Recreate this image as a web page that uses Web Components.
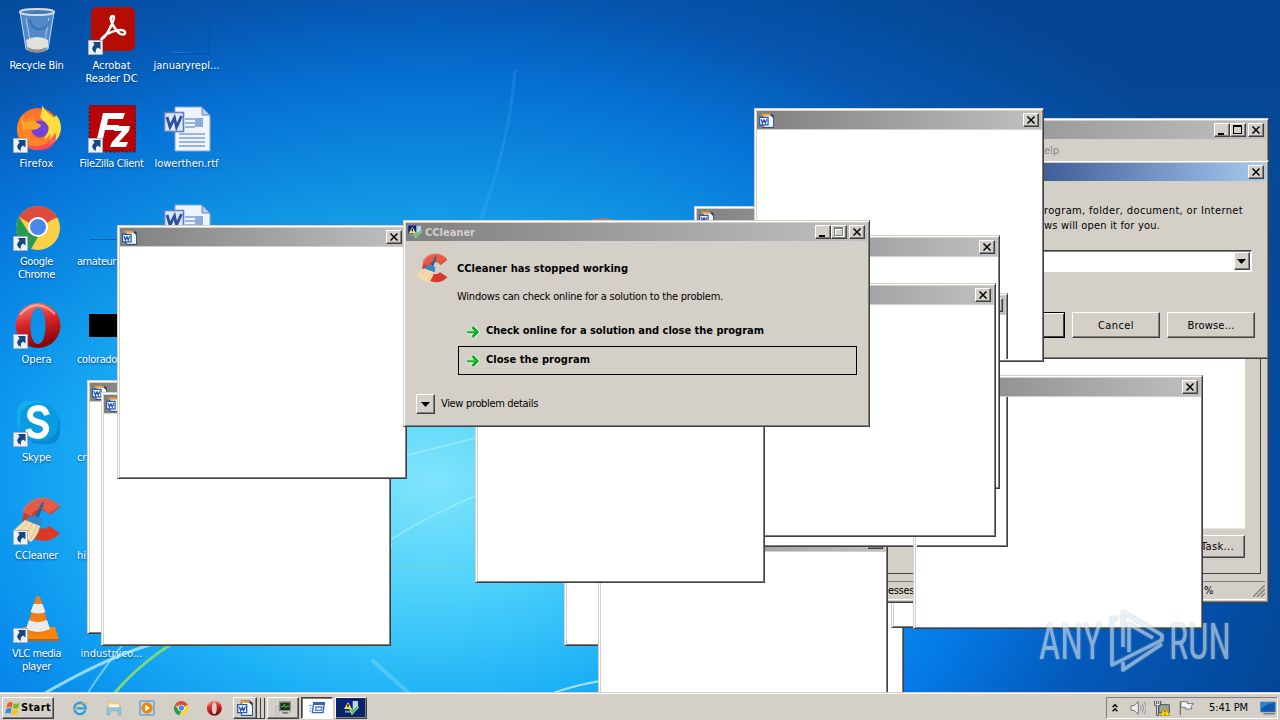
<!DOCTYPE html>
<html lang="en">
<head>
<meta charset="utf-8">
<title>Desktop</title>
<style>
    html, body { margin: 0; height: 100%; overflow: hidden; }
    body { font: 11px/13px "DejaVu Sans Condensed", "DejaVu Sans", sans-serif; font-stretch: condensed; color: #000; }
</style>
</head>
<body>
<classic-desktop>
    <desktop-icons slot="icons">
        <desktop-icon name="bin"><fit-label width="54">Recycle Bin</fit-label></desktop-icon>
        <desktop-icon name="firefox" shortcut><fit-label width="34">Firefox</fit-label></desktop-icon>
        <desktop-icon name="chrome" shortcut><fit-label width="33">Google</fit-label><fit-label width="37">Chrome</fit-label></desktop-icon>
        <desktop-icon name="opera" shortcut><fit-label width="30">Opera</fit-label></desktop-icon>
        <desktop-icon name="skype" shortcut><fit-label width="29">Skype</fit-label></desktop-icon>
        <desktop-icon name="ccleaner" shortcut><fit-label width="43">CCleaner</fit-label></desktop-icon>
        <desktop-icon name="vlc" shortcut><fit-label width="49">VLC media</fit-label><fit-label width="29">player</fit-label></desktop-icon>

        <desktop-icon name="acrobat" shortcut><fit-label width="38">Acrobat</fit-label><fit-label width="52">Reader DC</fit-label></desktop-icon>
        <desktop-icon name="filezilla" shortcut><fit-label width="64">FileZilla Client</fit-label></desktop-icon>
        <desktop-icon name="line" start><fit-label width="39">amateur</fit-label></desktop-icon>
        <desktop-icon name="black" start><fit-label width="40">colorado</fit-label></desktop-icon>
        <desktop-icon name="none" start><fit-label width="9">cr</fit-label></desktop-icon>
        <desktop-icon name="none" start><fit-label width="9">hi</fit-label></desktop-icon>
        <desktop-icon name="none"><fit-label width="62">industryco...</fit-label></desktop-icon>

        <desktop-icon name="blank"><fit-label width="66">januaryrepl...</fit-label></desktop-icon>
        <desktop-icon name="word"><fit-label width="64">lowerthen.rtf</fit-label></desktop-icon>
        <desktop-icon name="word"></desktop-icon>
    </desktop-icons>

    <blank-window x="87" y="380"></blank-window>
    <blank-window x="101" y="392"></blank-window>
    <blank-window x="117" y="225"></blank-window>
    <blank-window x="694" y="206"></blank-window>
    <blank-window x="564" y="392"></blank-window>
    <blank-window x="614" y="470"></blank-window>
    <blank-window x="891" y="374"></blank-window>

    <classic-window x="868" y="118" w="401" h="485" buttons="min max close">
        <task-manager></task-manager>
    </classic-window>
    <classic-window x="922" y="160" w="347" h="199" buttons="close" active>
        <run-form></run-form>
    </classic-window>

    <blank-window x="754" y="108"></blank-window>
    <blank-window x="913" y="375"></blank-window>
    <blank-window x="598" y="530"></blank-window>
    <blank-window x="718" y="293" class="ghost"></blank-window>
    <blank-window x="710" y="235"></blank-window>
    <blank-window x="706" y="283"></blank-window>
    <blank-window x="475" y="329"></blank-window>

    <classic-window x="403" y="220" w="467" h="207" buttons="min max-off close">
        <app-icon slot="icon" name="crash" size="14"></app-icon>
        <fit-label slot="title" width="50">CCleaner</fit-label>
        <crash-report></crash-report>
    </classic-window>

    <any-watermark slot="over"></any-watermark>
    <task-bar slot="bar"></task-bar>
</classic-desktop>

<script>
const WORD_DOC = `
    <path d="M12 2h27l8 8v36H12z" fill="#eef4fd" stroke="#8aa4cf"/>
    <path d="M39 2v8h8z" fill="#b8cbea" stroke="#6484ba"/>
    <path d="M22 14h10M22 18h10M22 22h10M16 29h26M16 33h26M16 37h26M16 41h26" stroke="#7f9fd4" stroke-width="1.3"/>
    <path d="M32 13h8v9h-8z" fill="#8eaad8"/>
    <path d="M1.500 7.500h19v19h-19z" fill="#dce7fa" stroke="#5c7fc4" stroke-width="1.600"/>
    <path d="M4 12l3 10 4.500-9 2 9 5-11" fill="none" stroke="#2c4f9e" stroke-width="2.800"/>`;

const CLEANER = `
    <path d="M47 10A21 21 0 1 0 47 36L36 29A9 9 0 1 1 37 18z" fill="#d83a2a"/>
    <path d="M46 9A21 21 0 0 0 9 15l9 4a10 10 0 0 1 18-2z" fill="#ee6a50" opacity=".7"/>
    <path d="M29 5l2 1-6 17-4-2z" fill="#1d69a8"/>
    <path d="M17 18l12 3-1 8-16-5z" fill="#3287c8"/>
    <path d="M12 23l15 6q-2 10-9 16L0 34z" fill="#f5dcae"/>
    <path d="M7 33l9-9M13 38l7-12M17 43l7-14" stroke="#e2bf86"/>`;

const ICONS = {
    none: '',
    bin: `
        <path d="M7 5l6 37q11 6 22 0l6-37z" fill="#9ec4e8" fill-opacity=".5" stroke="#bcd8f0"/>
        <path d="M13 33q11-6 22 0v8q-11 6-21 0z" fill="#e2e2dc"/>
        <path d="M14 40q10 5 20 0l-1 4q-9 3-18 0z" fill="#8d8f90"/>
        <path d="M13 11l4 23M36 11l-4 22" stroke="#e8f5ff" stroke-opacity=".6" fill="none"/>
        <path d="M16 12q4 12 12 10t8-8" stroke="#1d55a4" stroke-width="2" stroke-opacity=".5" fill="none"/>
        <ellipse cx="24" cy="5" rx="17" ry="3" fill="#417fb9" stroke="#d8dcdf" stroke-width="2"/>`,
    firefox: `
        <circle cx="25" cy="24" r="21" fill="#ff722b"/>
        <path d="M29 0q1 4 -2 12l9 10-8 20q18-2 20-18 0-9-5-14-1 3-3 2-8-6-11-12z" fill="#ffdf3d"/>
        <path d="M4 25Q5 14 10 9l3 6q5-5 9-5-2 3 1 6l5 2Q13 26 20 32q10 7 17-3 3 14-12 16Q5 43 4 25z" fill="#ff8426"/>
        <path d="M6 31q8 14 24 9 8-3 12-13Q46 38 35 44 14 49 6 31z" fill="#f8386a" fill-opacity=".75"/>
        <circle cx="27" cy="24" r="8.500" fill="#7441d8"/>
        <path d="M8 12l4 6q9-5 12 0 6 2 3 4-4 4-10 2l-7 1z" fill="#ffa229"/>`,
    chrome: `
        <circle cx="25" cy="25" r="22" fill="#fbd045"/>
        <path d="M25 25L6 14A22 22 0 0 1 44 14z" fill="#dd4b3e"/>
        <path d="M25 15h20l-1-2Z" fill="#dd4b3e"/>
        <path d="M6 14l10 16 9 4-7 12A22 22 0 0 1 6 14z" fill="#259a55"/>
        <circle cx="25" cy="24" r="10" fill="#fff"/><circle cx="25" cy="24" r="8" fill="#4b86ec"/>`,
    opera: `
        <defs><linearGradient id="o" x2=".3" y2="1"><stop stop-color="#ff8e7a"/><stop offset=".5" stop-color="#d8262a"/><stop offset="1" stop-color="#8c070c"/></linearGradient></defs>
        <path fill-rule="evenodd" d="M25 2a22 22 0 1 1 0 45 22 22 0 0 1 0-45zm0 5c-10 0-10 36 0 36s10-36 0-36z" fill="url(#o)"/>
        <path d="M7 14Q23-5 42 13" fill="none" stroke="#ffc4b9" stroke-opacity=".7" stroke-width="2"/>`,
    skype: `
        <rect x="4" y="2" width="30" height="31" rx="11" fill="#16aeea"/>
        <rect x="14" y="13" width="33" height="32" rx="11" fill="#0989d4"/>
        <rect x="7" y="4" width="38" height="38" rx="16" fill="#089ce2"/>
        <path d="M34 16q-2-7-9-7-8 1-8 7 0 5 8 7 9 2 8 8-2 6-8 6-8 0-10-7" fill="none" stroke="#fff" stroke-width="6"/>`,
    ccleaner: CLEANER,
    vlc: `
        <path d="M10 32h32l4 13H6z" fill="#f78611"/><path d="M6 44h40v2H6z" fill="#c75e05"/>
        <path d="M23 2q2-2 4 0l10 34q-12 8-24 0z" fill="#f47d0d"/>
        <path d="M20.500 9h9l3 8q-7 3-15 0zM16 25q9 4 18 0l3 9q-12 6-24 0z" fill="#ebebeb"/>`,
    acrobat: `
        <rect x="3" y="0" width="44" height="44" rx="6" fill="#b50d04"/>
        <path d="M25 9c-5 0-1 9 4 15 4 5 9 4 8 1-2-4-12-1-18 2-5 3-7 7-5 5 5-3 15-23 11-23z" fill="none" stroke="#fff" stroke-width="2.500"/>`,
    filezilla: `
        <rect x="1.500" y="0.500" width="46" height="46" fill="#b60408" stroke="#850207" stroke-dasharray="2 2" stroke-width="2"/>
        <path d="M15 8h22l-2 6H20l-1 6h12l-2 5H17l-3 13H8z" fill="#fff"/>
        <path d="M27 21h15l-1 5-10 11h9l-2 5H22l2-5 10-11h-8z" fill="#fff"/>`,
    word: WORD_DOC,
    black: `<path d="M1 13h47v23H1z" fill="#000"/>`,
    line: `<path d="M2 36.500h46" stroke="#035eb4"/>`,
    blank: `<path d="M46.500 20v26.500H4" stroke="#0349a0" stroke-opacity=".7" fill="none"/><path d="M8 45.500h20" stroke="#268be0" stroke-opacity=".6"/>`,
    doc: `
        <path d="M13 2h25l9 9v35H13z" fill="#f2f6ff" stroke="#16336c" stroke-width="3"/>
        <path d="M9 1h28v8H9z" fill="#e9a23c"/><path d="M34 5l12 12V6z" fill="#243a5e"/>
        <path d="M2 14h27v24H2z" fill="#fff" stroke="#2a59b0" stroke-width="4"/>
        <path d="M7 20l4 12 5-10 4 10 5-12" fill="none" stroke="#1d50b4" stroke-width="4"/>`,
    crash: `
        <path d="M1 2h28v26H1z" fill="#0b1a9c"/><path d="M29 3h16v24H29z" fill="#b8d4ea"/>
        <path d="M15 6l12 21H3z" fill="#f5e52f"/><path d="M15 13v8" stroke="#000" stroke-width="4"/>
        <path d="M6 32h22v6H6z" fill="#8297b5"/><path d="M20 26l7 18 20-22-5-5-13 13z" fill="#4ebd55" stroke="#e5f7e0" stroke-width="2"/>`,
    arrow: `
        <path d="M3 24h34M22 6l18 18-18 18" fill="none" stroke="#eef8ea" stroke-width="15"/>
        <path d="M4 24h34M22 7l17 17-17 17" fill="none" stroke="#12a826" stroke-width="9"/>
        <path d="M5 22h30" stroke="#4fd65c" stroke-width="3"/>`,
    ie: `
        <path d="M40 31A17 17 0 1 1 41 25H14" fill="none" stroke="#2a9fe3" stroke-width="7"/>
        <path d="M5 43Q-3 34 20 17 45 0 45 9q-1 5-4 7" fill="none" stroke="#efc24a" stroke-width="3"/>`,
    explorer: `
        <path d="M5 5h14l3 5h20v25H5z" fill="#f2d98b" stroke="#c4a65b"/>
        <path d="M10 13h28v12H10z" fill="#fcf6dd"/><path d="M3 23h42v22h-9V32H12v13H3z" fill="#8ac8e8" stroke="#4b94bd"/>`,
    player: `
        <path d="M3 3h42v42H3z" fill="#b8dcf2" stroke="#438abf" stroke-width="3"/>
        <circle cx="24" cy="24" r="17" fill="#f1860c"/><path d="M19 14l14 10-14 10z" fill="#fff"/>`,
    manager: `
        <path d="M3 18h8v28H3z" fill="#d9d9d9" stroke="#777"/><path d="M14 6h32v26H14z" fill="#222a26" stroke="#8a8d8a" stroke-width="4"/>
        <path d="M18 20h7l3-8 4 12 4-6h7" stroke="#29d342" stroke-width="3" fill="none"/><path d="M22 36h18v5H22z" fill="#777"/>`,
    run: `
        <path d="M14 8h32l-4 30H10z" fill="#fff" stroke="#3265bf" stroke-width="4"/><path d="M14 7h33l-1 8H13z" fill="#3265bf"/>
        <path d="M21 21h18l-2 10H20z" fill="none" stroke="#4f7fd0" stroke-width="4"/><path d="M0 17h8M3 25h5M0 33h7" stroke="#6d98dc" stroke-width="3"/>`,
    flagwin: `
        <path d="M8 9q8-6 15-1l-3 15q-8-4-16 1z" fill="#ef5a24"/><path d="M26 10q8 4 18-2l-4 16q-8 5-17 0z" fill="#7fb92b"/>
        <path d="M4 27q8-5 16-1l-4 15Q8 36 0 42z" fill="#2f92dc"/><path d="M23 27q8 5 17 1l-4 15q-8 5-17-1z" fill="#fbc21c"/>`,
    sound: `<path d="M3 17h9L25 5v38L12 31H3z" fill="#eee" stroke="#777" stroke-width="3"/><path d="M31 16q6 8 0 16M37 11q9 13 0 26M43 6q12 18 0 36" fill="none" stroke="#888" stroke-width="2.500"/>`,
    network: `
        <path d="M14 14h32v24H14z" fill="#98a4a8" stroke="#555" stroke-width="3"/>
        <path d="M2 3v13h6v30h6V16h6V3M8 3v9M14 3v9" fill="#eee" stroke="#444" stroke-width="3"/>
        <path d="M33 21l15 26H18z" fill="#ffdc18" stroke="#a27b09" stroke-width="2"/><path d="M33 29v8m0 4v3" stroke="#222" stroke-width="3"/>`,
    flag: `<path d="M7 4v42" stroke="#777" stroke-width="4"/><path d="M9 5h19v6h18l-7 9 3 7H22v-5H9z" fill="#f6f6f6" stroke="#777" stroke-width="3"/>`,
    monitor: `<path d="M2 6h44v30H2z" fill="#1259ae" stroke="#4587ca" stroke-width="2"/><path d="M2 28Q20 8 46 9V6H2z" fill="#2f80d0"/><path d="M10 40h35v3H10z" fill="#555"/>`,
    up: `<path d="M16 21l8-8 8 8M16 35l8-8 8 8" fill="none" stroke="#000" stroke-width="5"/>`
};

class BaseElement extends HTMLElement {
    constructor() {
        super();
        this.attachShadow({ mode: 'open' });
    }

    connectedCallback() {
        this.shadowRoot.innerHTML = `<style>${this.styles}</style>${this.markup}`;
        this.ready();
    }

    get styles() { return ''; }
    get markup() { return '<slot></slot>'; }
    ready() {}
}

/* One line of text, tracked so that it takes the given width. */
class FitLabel extends BaseElement {
    get styles() { return ':host { display: inline-block; white-space: pre; } span { display: inline-block; }'; }
    get markup() { return '<span><slot></slot></span>'; }

    ready() {
        const span = this.shadowRoot.querySelector('span');
        const width = span.getBoundingClientRect().width;
        const spacing = (Number(this.getAttribute('width')) - width) / this.textContent.length;
        span.style.letterSpacing = spacing.toFixed(3) + 'px';
    }
}

class AppIcon extends BaseElement {
    get styles() {
        const size = this.getAttribute('size') || 48;
        return `:host { display: block; flex: none; width: ${size}px; height: ${size}px; } svg { display: block; }`;
    }
    get markup() {
        return `<svg width="100%" height="100%" viewBox="0 0 48 48">${ICONS[this.getAttribute('name')]}</svg>`;
    }
}

class DesktopIcons extends BaseElement {
    get styles() {
        return `:host {
            display: grid; grid-auto-flow: column; grid-template-rows: repeat(7, 98px);
            grid-auto-columns: 75px; justify-content: start; padding-top: 7px; margin-left: -1px;
        }`;
    }
}

class DesktopIcon extends BaseElement {
    get styles() {
        return `
            :host { display: flex; flex-direction: column; align-items: center; color: #fff; text-shadow: 0 1px 2px #023a80; }
            :host([start]) .label { align-self: flex-start; padding-left: 3px; }
            .picture { position: relative; padding-left: 1px; }
            .arrow { position: absolute; left: 1px; bottom: 0; display: none; }
            :host([shortcut]) .arrow { display: block; }
            .label { display: flex; flex-direction: column; align-items: center; padding-top: 4px; }
        `;
    }
    get markup() {
        return `
            <div class="picture">
                <app-icon name="${this.getAttribute('name')}"></app-icon>
                <svg class="arrow" width="15" height="15" viewBox="0 0 15 15">
                    <path d="M.5.5h14v14H.5z" fill="#edf2f8" stroke="#a7b2bd"/>
                    <path d="M5 2h7.500v7.500L10 7.500Q7 9 8 13 1 10 6.500 4.500z" fill="#164681"/>
                </svg>
            </div>
            <div class="label"><slot></slot></div>`;
    }
}

class CaptionButton extends BaseElement {
    get styles() {
        return `
            :host {
                display: block; box-sizing: border-box; width: 16px; height: 14px; background: #d4d0c8;
                border: 1px solid; border-color: #fff #404040 #404040 #fff; box-shadow: inset -1px -1px #808080;
            }
            svg { display: block; }
        `;
    }
    get markup() {
        const glyphs = {
            min: '<path d="M3 9h6v2H3z"/>',
            max: '<path fill-rule="evenodd" d="M2 1h9v9H2zm1 2v6h7V3z"/>',
            'max-off': '<path fill="#fff" fill-rule="evenodd" d="M3 2h9v9H3zm1 2v6h7V4z"/><path fill="#808080" fill-rule="evenodd" d="M2 1h9v9H2zm1 2v6h7V3z"/>',
            close: '<path d="M3.500 2.500l7 7M10.500 2.500l-7 7" stroke="#000" stroke-width="1.500"/>',
            down: '<path d="M2 3h9L6.500 8z"/>'
        };
        return `<svg width="14" height="12">${glyphs[this.getAttribute('glyph')]}</svg>`;
    }
}

class ClassicWindow extends BaseElement {
    get styles() {
        const box = ['x', 'y', 'w', 'h'].map(name => this.getAttribute(name));
        return `
            :host {
                position: absolute; left: ${box[0]}px; top: ${box[1]}px; width: ${box[2]}px; height: ${box[3]}px;
                box-sizing: border-box; display: flex; flex-direction: column; background: #d4d0c8;
                border: 1px solid; border-color: #d4d0c8 #404040 #404040 #d4d0c8;
                box-shadow: inset 1px 1px #fff, inset -1px -1px #808080;
            }
            header {
                display: flex; align-items: center; height: 18px; margin: 2px 2px 0; padding: 0 2px;
                background: linear-gradient(90deg, #808080, #c0c0c0); color: #d4d0c8; font-weight: bold;
            }
            :host([active]) header { background: linear-gradient(90deg, #0a246a, #a6caf0); }
            .title { flex: 1; padding-left: 3px; }
            .buttons { display: flex; }
            caption-button[glyph="close"]:not(:first-child) { margin-left: 2px; }
            main { flex: 1; min-height: 0; display: flex; flex-direction: column; }
        `;
    }
    get markup() {
        const buttons = this.getAttribute('buttons').split(' ')
            .map(glyph => `<caption-button glyph="${glyph}"></caption-button>`).join('');
        return `
            <header>
                <slot name="icon"></slot>
                <div class="title"><slot name="title"></slot></div>
                <div class="buttons">${buttons}</div>
            </header>
            <main><slot></slot></main>`;
    }
}

class BlankWindow extends BaseElement {
    get styles() {
        return `
            :host { display: contents; }
            :host(.ghost) classic-window { clip-path: polygon(0 0, 290px 0, 290px 66px, 282px 66px, 282px 104px, 290px 104px, 290px 254px, 199px 254px, 199px 244px, 195px 244px, 195px 254px, 0 254px); }
            .page { flex: 1; margin: 1px 1px 1px 2px; background: #fff; }
        `;
    }
    get markup() {
        return `
            <classic-window x="${this.getAttribute('x')}" y="${this.getAttribute('y')}" w="290" h="254" buttons="close">
                <app-icon slot="icon" name="doc" size="15"></app-icon>
                <div class="page"></div>
            </classic-window>`;
    }
}

class PushButton extends BaseElement {
    get styles() {
        return `
            :host {
                display: flex; align-items: center; justify-content: center; box-sizing: border-box; height: 26px;
                background: #d4d0c8; border: 1px solid; border-color: #fff #404040 #404040 #fff;
                box-shadow: inset -1px -1px #808080; white-space: nowrap;
            }
            :host([default]) { border-color: #000; box-shadow: inset 1px 1px #fff, inset -1px -1px #404040; }
        `;
    }
}

class TaskManager extends BaseElement {
    get styles() {
        return `
            :host { flex: 1; display: flex; flex-direction: column; }
            nav { padding: 5px 0 0 175px; height: 18px; color: #87847f; }
            .page { flex: 1; margin: 0 7px 7px; border: 1px solid #404040; border-left-color: #fff; padding: 20px 15px 15px; display: flex; flex-direction: column; align-items: flex-end; }
            .list { flex: 1; align-self: stretch; background: #fff; border-bottom: 1px solid #e8e6e0; margin-bottom: 6px; }
            push-button { width: 93px; height: 23px; justify-content: flex-end; padding-right: 10px; }
            footer { display: flex; height: 17px; margin: 0 3px 2px; border-top: 1px solid #808080; border-bottom: 1px solid #fff; align-items: center; }
            .cpu { margin-left: 290px; flex: 1; }
        `;
    }
    get markup() {
        return `
            <nav><fit-label width="15">elp</fit-label></nav>
            <div class="page">
                <div class="list"></div>
                <push-button><fit-label width="33">Task...</fit-label></push-button>
            </div>
            <footer>
                <fit-label width="26" style="padding-left:16px">esses</fit-label>
                <span class="cpu">%</span>
                <svg width="12" height="12"><path d="M0 12L12 0M4 12l8-8M8 12l4-4" stroke="#808080" stroke-width="1.500"/></svg>
            </footer>`;
    }
}

class RunForm extends BaseElement {
    get styles() {
        return `
            :host { display: flex; flex-direction: column; padding: 22px 13px 0 0; }
            p { margin: 0; padding-left: 121px; line-height: 15px; }
            .combo {
                display: flex; justify-content: flex-end; align-items: stretch; height: 18px; background: #fff; margin: 17px 3px 0 40px;
                border: 1px solid; border-color: #404040 #fff #fff #404040; padding: 1px; box-shadow: inset 1px 1px #808080;
            }
            .combo caption-button { height: auto; padding-top: 3px; }
            .buttons { display: flex; justify-content: flex-end; gap: 7px; margin-top: 40px; }
            push-button { width: 88px; }
        `;
    }
    get markup() {
        return `
            <p><fit-label width="199">rogram, folder, document, or Internet</fit-label></p>
            <p><fit-label width="116">ws will open it for you.</fit-label></p>
            <div class="combo"><caption-button glyph="down"></caption-button></div>
            <div class="buttons">
                <push-button default></push-button>
                <push-button><fit-label width="36">Cancel</fit-label></push-button>
                <push-button><fit-label width="47">Browse...</fit-label></push-button>
            </div>`;
    }
}

class CrashReport extends BaseElement {
    get styles() {
        return `
            :host { display: flex; flex-direction: column; padding: 10px 12px 0; }
            .top { display: flex; gap: 9px; }
            .top app-icon { margin-top: 2px; }
            .text { display: flex; flex-direction: column; gap: 15px; padding-top: 11px; }
            b, .choice { font-weight: bold; }
            .choice { display: flex; align-items: center; gap: 6px; box-sizing: border-box; height: 29px; margin-left: 42px; padding: 0 7px; border: 1px solid transparent; }
            .choice fit-label { padding-bottom: 2px; }
            .choice.first { margin-top: 14px; }
            .choice.focus { border-color: #000; }
            .details { display: flex; align-items: center; gap: 6px; margin-top: 19px; }
            .details fit-label { padding-bottom: 2px; }
            .details caption-button { width: 19px; height: 20px; padding: 4px 0 0 2px; }
        `;
    }
    get markup() {
        return `
            <div class="top">
                <app-icon name="ccleaner" size="32"></app-icon>
                <div class="text">
                    <b><fit-label width="171">CCleaner has stopped working</fit-label></b>
                    <fit-label width="266">Windows can check online for a solution to the problem.</fit-label>
                </div>
            </div>
            <div class="choice first"><app-icon name="arrow" size="14"></app-icon><fit-label width="278">Check online for a solution and close the program</fit-label></div>
            <div class="choice focus"><app-icon name="arrow" size="14"></app-icon><fit-label width="104">Close the program</fit-label></div>
            <div class="details"><caption-button glyph="down"></caption-button><fit-label width="97">View problem details</fit-label></div>`;
    }
}

class TaskBar extends BaseElement {
    get styles() {
        return `
            :host { display: flex; align-items: center; box-sizing: border-box; height: 28px; background: #d4d0c8; border-top: 1px solid #d4d0c8; box-shadow: inset 0 1px #fff; padding: 2px 2px 0; }
            push-button { height: 22px; }
            .start { width: 52px; font-weight: bold; }
            .quick { display: flex; gap: 17.5px; margin: 0 11px 0 18px; }
            .apps { display: flex; gap: 2px; flex: 1; }
            .apps push-button { width: 32px; }
            .apps .stack { display: flex; }
            .apps .stack push-button { width: 24px; }
            .stack i { width: 3px; height: 20px; border: 1px solid #404040; border-width: 0 1px 1px 0; margin-top: 1px; }
            .apps .on { background: #fff; border-color: #404040 #fff #fff #404040; box-shadow: inset 1px 1px #808080; }
            .apps .flash { background: #0a246a; }
            .tray { display: flex; align-items: center; gap: 8px; box-sizing: border-box; width: 172px; height: 22px; padding: 0 1px; border: 1px solid; border-color: #808080 #fff #fff #808080; }
            .clock { flex: 1; text-align: right; padding-right: 4px; }
        `;
    }
    get markup() {
        const icon = (name, size = 16) => `<app-icon name="${name}" size="${size}"></app-icon>`;
        return `
            <push-button class="start">${icon('flagwin')}<fit-label width="30">Start</fit-label></push-button>
            <div class="quick">${['ie', 'explorer', 'player', 'chrome', 'opera'].map(name => icon(name)).join('')}</div>
            <div class="apps">
                <div class="stack"><push-button>${icon('doc')}</push-button><i></i><i></i></div>
                <push-button>${icon('manager')}</push-button>
                <push-button class="on">${icon('run')}</push-button>
                <push-button class="flash">${icon('crash')}</push-button>
            </div>
            <div class="tray">
                ${icon('up', 14)}${icon('sound')}${icon('network')}${icon('flag')}
                <div class="clock"><fit-label width="39">5:41 PM</fit-label></div>
                ${icon('monitor')}
            </div>`;
    }
}

class AnyWatermark extends BaseElement {
    get styles() { return ':host { position: absolute; left: 1036px; top: 592px; opacity: .6; } svg { display: block; }'; }
    get markup() {
        return `
            <svg width="240" height="96" fill="#dbe8f4" font-family="Roboto, sans-serif" font-size="50">
                <g style="filter: drop-shadow(0 0 1px #8c9cab)">
                    <text x="3" y="67" textLength="63" lengthAdjust="spacingAndGlyphs">ANY</text>
                    <text x="133" y="67" textLength="62" lengthAdjust="spacingAndGlyphs">RUN</text>
                    <path d="M87 55V20L126 43V48L76 73V26h6M126 52L87 78V70M93 60V32L117 46" fill="none" stroke="#dbe8f4" stroke-width="3.500" stroke-linejoin="round"/>
                </g>
            </svg>`;
    }
}

class ClassicDesktop extends BaseElement {
    get styles() {
        return `
            :host {
                position: relative; display: flex; flex-direction: column; width: 1280px; height: 720px; overflow: hidden;
                background:
                    linear-gradient(rgba(10, 60, 120, .22), rgba(20, 90, 150, .16) 180px, transparent 400px),
                    radial-gradient(ellipse 760px 540px at 430px 480px, #80e4fc 0, #50d2fb 20%, #1cb0f6 42%, #0c96ee 58%, #047ae6 74%, #0459ba 92%, #034696 118%);
            }
            .rays { position: absolute; left: 0; top: 0; }
            .work { position: relative; flex: 1; min-height: 0; overflow: hidden; }
        `;
    }
    get markup() {
        return `
            <div class="work">
                <svg class="rays" width="1280" height="692" fill="none">
                    <path d="M40 696Q110 655 160 642T392 545" stroke="#c8f6ff" stroke-width="3" opacity=".7"/>
                    <path d="M86 696Q120 640 200 560" stroke="#c8f6ff" stroke-width="2" opacity=".5"/>
                    <path d="M112 696Q150 650 215 620" stroke="#96e65a" stroke-width="3" opacity=".8"/>
                    <path d="M390 540Q430 515 475 496M405 456L475 438" stroke="#b4f0ff" stroke-width="1.500" opacity=".6"/>
                    <path d="M390 568q45-4 80 1" stroke="#70d8ae" opacity=".5" stroke-width="1.500"/>
                    <path d="M372 660l40 36" stroke="#a0ecff" stroke-width="4" opacity=".3"/>
                    <path d="M550 694q25-9 50-13" stroke="#9fe2ff" stroke-width="2"/>
                    <path d="M515 70Q510 140 480 222" stroke="#5cb8ef" stroke-width="3" opacity=".2"/>
                    <ellipse cx="603" cy="221" rx="14" ry="2.500" fill="#c97a5c"/>
                </svg>
                <slot name="icons"></slot>
                <slot></slot>
                <slot name="over"></slot>
            </div>
            <slot name="bar"></slot>`;
    }
}

customElements.define('app-icon', AppIcon);
customElements.define('caption-button', CaptionButton);
customElements.define('push-button', PushButton);
customElements.define('classic-window', ClassicWindow);
customElements.define('blank-window', BlankWindow);
customElements.define('desktop-icon', DesktopIcon);
customElements.define('desktop-icons', DesktopIcons);
customElements.define('task-manager', TaskManager);
customElements.define('run-form', RunForm);
customElements.define('crash-report', CrashReport);
customElements.define('task-bar', TaskBar);
customElements.define('any-watermark', AnyWatermark);
customElements.define('classic-desktop', ClassicDesktop);
// labels measure themselves, so everything around them has to be styled first
customElements.define('fit-label', FitLabel);
</script>
</body>
</html>
